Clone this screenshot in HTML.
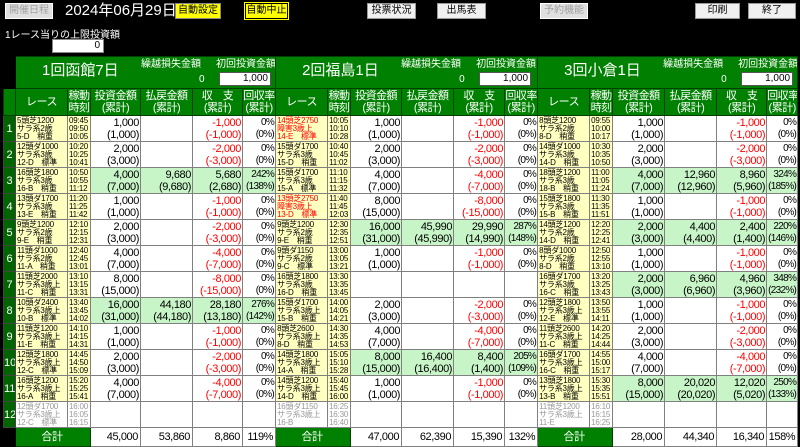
<!DOCTYPE html>
<html><head><meta charset="utf-8">
<style>
body{margin:0;background:#000;width:800px;height:446px;overflow:hidden;font-family:"Liberation Sans","Noto Sans CJK JP",sans-serif;position:relative}
.b{position:absolute;top:3px;height:16px;font-size:10px;line-height:14px;text-align:center;box-sizing:border-box;overflow:hidden;white-space:nowrap}
.gray{background:#e0e0e0;color:#a0a0a0;border:1px solid #fff}
.wb{background:#f0f0f0;color:#000;border:1px solid #999}
.yl{background:#ffff00;color:#000;border:1px solid #888}
table{position:absolute;left:3px;top:56px;border-collapse:collapse;table-layout:fixed;width:794px}
td{border:1px solid #808080;padding:0;font-size:11px;line-height:12px;overflow:hidden;white-space:nowrap;background:#fff;color:#000}
tr.d{height:26px}
td.i{background:#006400;color:#fff;text-align:center;font-size:11px;border-color:#444}
td.k{background:#000;border-color:#000}
td.r,td.t{background:#ffffc0;font-size:8px;line-height:8px;text-align:left;padding-left:1px;vertical-align:top;padding-top:1px;letter-spacing:-0.2px}
td.rd{color:#f00}
td.g{background:#fff;color:#999}
td.n{text-align:right;padding-right:1px;letter-spacing:-0.4px}
tr.d td:nth-child(7),tr.d td:nth-child(13),tr.d td:nth-child(19){font-size:10px;letter-spacing:-0.7px}
td.m{color:#f00}
td.w{background:#c8f5c8}
tr.h2 td{background:#008000;color:#fff;text-align:center;font-size:11px;line-height:12px;border-color:#004000;height:26px;letter-spacing:-0.5px}
tr.h1 td.v{background:#008000;color:#fff;border-color:#004000;height:31px;position:relative}
.vt{position:absolute;left:26px;top:8px;font-size:15px}
.l1{position:absolute;left:125px;top:2px;font-size:10px}
.l0{position:absolute;left:183px;top:17px;font-size:10px}
.l2{position:absolute;left:200px;top:2px;font-size:10px}
.in{position:absolute;left:203px;top:15px;width:52px;height:14px;background:#fff;color:#000;border:1px solid #555;font-size:10px;line-height:12px;text-align:right;box-sizing:border-box;padding-right:2px}
tr.tt td{height:18px;font-size:11px;text-align:right;padding-right:2px;letter-spacing:-0.4px}
tr.tt td.gl{background:#008000;color:#fff;text-align:center;border-color:#004000}
</style></head><body>
<div class="b gray" style="left:5px;width:48px">開催日程</div>
<div style="position:absolute;left:65px;top:2px;color:#fff;font-size:15px;line-height:18px">2024年06月29日</div>
<div class="b yl" style="left:175px;width:46px">自動設定</div>
<div class="b yl" style="left:245px;width:43px;border:1px solid #000;outline:1px solid #ff0">自動中止</div>
<div class="b wb" style="left:367px;width:49px">投票状況</div>
<div class="b wb" style="left:437px;width:49px">出馬表</div>
<div class="b gray" style="left:540px;width:48px">予約機能</div>
<div class="b wb" style="left:695px;width:45px">印刷</div>
<div class="b wb" style="left:748px;width:48px">終了</div>
<div style="position:absolute;left:5px;top:26px;color:#fff;font-size:10px">1レース当りの上限投資額</div>
<div style="position:absolute;left:52px;top:39px;width:52px;height:14px;background:#fff;border:1px solid #888;box-sizing:border-box;font-size:10px;line-height:12px;text-align:right;padding-right:3px">0</div>

<table>
<colgroup><col style="width:12px">
<col style="width:52px"><col style="width:23px"><col style="width:50px"><col style="width:52px"><col style="width:50px"><col style="width:33px">
<col style="width:52px"><col style="width:23px"><col style="width:51px"><col style="width:52px"><col style="width:51px"><col style="width:33px">
<col style="width:52px"><col style="width:23px"><col style="width:52px"><col style="width:52px"><col style="width:50px"><col style="width:31px">
</colgroup>
<tr class="h1"><td class="k"></td>
<td class="v" colspan="6"><span class="vt">1回函館7日</span><span class="l1">繰越損失金額</span><span class="l0">0</span><span class="l2">初回投資金額</span><span class="in">1,000</span></td>
<td class="v" colspan="6"><span class="vt">2回福島1日</span><span class="l1">繰越損失金額</span><span class="l0">0</span><span class="l2">初回投資金額</span><span class="in">1,000</span></td>
<td class="v" colspan="6"><span class="vt">3回小倉1日</span><span class="l1">繰越損失金額</span><span class="l0">0</span><span class="l2">初回投資金額</span><span class="in">1,000</span></td></tr>
<tr class="h2"><td class="k"></td>
<td>レース</td><td>稼動<br>時刻</td><td>投資金額<br>(累計)</td><td>払戻金額<br>(累計)</td><td>収　支<br>(累計)</td><td>回収率<br>(累計)</td>
<td>レース</td><td>稼動<br>時刻</td><td>投資金額<br>(累計)</td><td>払戻金額<br>(累計)</td><td>収　支<br>(累計)</td><td>回収率<br>(累計)</td>
<td>レース</td><td>稼動<br>時刻</td><td>投資金額<br>(累計)</td><td>払戻金額<br>(累計)</td><td>収　支<br>(累計)</td><td>回収率<br>(累計)</td></tr>

<tr class="d"><td class="i">1</td>
<td class="r">5頭芝1200<br>サラ系2歳<br>5-D　稍重</td><td class="t">09:45<br>09:50<br>10:05</td><td class="n">1,000<br>(1,000)</td><td class="n"></td><td class="n m">-1,000<br>(-1,000)</td><td class="n">0%<br>(0%)</td>
<td class="r rd">14頭芝2750<br>障害3歳上<br>14-E　標準</td><td class="t">10:05<br>10:10<br>10:28</td><td class="n">1,000<br>(1,000)</td><td class="n"></td><td class="n m">-1,000<br>(-1,000)</td><td class="n">0%<br>(0%)</td>
<td class="r">8頭芝1200<br>サラ系2歳<br>8-D　稍重</td><td class="t">09:55<br>10:00<br>10:17</td><td class="n">1,000<br>(1,000)</td><td class="n"></td><td class="n m">-1,000<br>(-1,000)</td><td class="n">0%<br>(0%)</td></tr>

<tr class="d"><td class="i">2</td>
<td class="r">12頭ダ1000<br>サラ系3歳<br>12-D　標準</td><td class="t">10:20<br>10:25<br>10:41</td><td class="n">2,000<br>(3,000)</td><td class="n"></td><td class="n m">-2,000<br>(-3,000)</td><td class="n">0%<br>(0%)</td>
<td class="r">15頭ダ1700<br>サラ系3歳<br>15-D　稍重</td><td class="t">10:40<br>10:45<br>11:02</td><td class="n">2,000<br>(3,000)</td><td class="n"></td><td class="n m">-2,000<br>(-3,000)</td><td class="n">0%<br>(0%)</td>
<td class="r">14頭ダ1000<br>サラ系3歳<br>14-D　稍重</td><td class="t">10:30<br>10:35<br>10:50</td><td class="n">2,000<br>(3,000)</td><td class="n"></td><td class="n m">-2,000<br>(-3,000)</td><td class="n">0%<br>(0%)</td></tr>

<tr class="d"><td class="i">3</td>
<td class="r">16頭芝1800<br>サラ系3歳<br>16-B　稍重</td><td class="t">10:50<br>10:55<br>11:12</td><td class="n w">4,000<br>(7,000)</td><td class="n w">9,680<br>(9,680)</td><td class="n w">5,680<br>(2,680)</td><td class="n w">242%<br>(138%)</td>
<td class="r">15頭ダ1700<br>サラ系3歳<br>15-A　標準</td><td class="t">11:10<br>11:15<br>11:32</td><td class="n">4,000<br>(7,000)</td><td class="n"></td><td class="n m">-4,000<br>(-7,000)</td><td class="n">0%<br>(0%)</td>
<td class="r">18頭芝1200<br>サラ系3歳<br>18-B　稍重</td><td class="t">11:00<br>11:05<br>11:24</td><td class="n w">4,000<br>(7,000)</td><td class="n w">12,960<br>(12,960)</td><td class="n w">8,960<br>(5,960)</td><td class="n w">324%<br>(185%)</td></tr>

<tr class="d"><td class="i">4</td>
<td class="r">13頭ダ1700<br>サラ系3歳<br>13-E　稍重</td><td class="t">11:20<br>11:25<br>11:42</td><td class="n">1,000<br>(1,000)</td><td class="n"></td><td class="n m">-1,000<br>(-1,000)</td><td class="n">0%<br>(0%)</td>
<td class="r rd">13頭芝2750<br>障害3歳上<br>13-D　標準</td><td class="t">11:40<br>11:45<br>12:03</td><td class="n">8,000<br>(15,000)</td><td class="n"></td><td class="n m">-8,000<br>(-15,000)</td><td class="n">0%<br>(0%)</td>
<td class="r">15頭芝1800<br>サラ系3歳<br>15-B　稍重</td><td class="t">11:30<br>11:35<br>11:51</td><td class="n">1,000<br>(1,000)</td><td class="n"></td><td class="n m">-1,000<br>(-1,000)</td><td class="n">0%<br>(0%)</td></tr>

<tr class="d"><td class="i">5</td>
<td class="r">9頭芝1200<br>サラ系2歳<br>9-E　稍重</td><td class="t">12:10<br>12:15<br>12:31</td><td class="n">2,000<br>(3,000)</td><td class="n"></td><td class="n m">-2,000<br>(-3,000)</td><td class="n">0%<br>(0%)</td>
<td class="r">9頭芝1200<br>サラ系2歳<br>9-E　稍重</td><td class="t">12:30<br>12:35<br>12:51</td><td class="n w">16,000<br>(31,000)</td><td class="n w">45,990<br>(45,990)</td><td class="n w">29,990<br>(14,990)</td><td class="n w">287%<br>(148%)</td>
<td class="r">14頭芝1200<br>サラ系2歳<br>14-D　稍重</td><td class="t">12:20<br>12:25<br>12:41</td><td class="n w">2,000<br>(3,000)</td><td class="n w">4,400<br>(4,400)</td><td class="n w">2,400<br>(1,400)</td><td class="n w">220%<br>(146%)</td></tr>

<tr class="d"><td class="i">6</td>
<td class="r">11頭ダ1000<br>サラ系2歳<br>11-A　稍重</td><td class="t">12:40<br>12:45<br>13:01</td><td class="n">4,000<br>(7,000)</td><td class="n"></td><td class="n m">-4,000<br>(-7,000)</td><td class="n">0%<br>(0%)</td>
<td class="r">9頭ダ1150<br>サラ系2歳<br>9-C　標準</td><td class="t">13:00<br>13:05<br>13:21</td><td class="n">1,000<br>(1,000)</td><td class="n"></td><td class="n m">-1,000<br>(-1,000)</td><td class="n">0%<br>(0%)</td>
<td class="r">8頭ダ1000<br>サラ系2歳<br>8-D　稍重</td><td class="t">12:50<br>12:55<br>13:10</td><td class="n">1,000<br>(1,000)</td><td class="n"></td><td class="n m">-1,000<br>(-1,000)</td><td class="n">0%<br>(0%)</td></tr>

<tr class="d"><td class="i">7</td>
<td class="r">11頭芝2000<br>サラ系3歳上<br>11-C　稍重</td><td class="t">13:10<br>13:15<br>13:31</td><td class="n">8,000<br>(15,000)</td><td class="n"></td><td class="n m">-8,000<br>(-15,000)</td><td class="n">0%<br>(0%)</td>
<td class="r">16頭芝1800<br>サラ系3歳<br>16-D　稍重</td><td class="t">13:30<br>13:35<br>13:45</td><td class="n"></td><td class="n"></td><td class="n"></td><td class="n"></td>
<td class="r">16頭ダ1700<br>サラ系3歳<br>16-C　稍重</td><td class="t">13:20<br>13:25<br>13:43</td><td class="n w">2,000<br>(3,000)</td><td class="n w">6,960<br>(6,960)</td><td class="n w">4,960<br>(3,960)</td><td class="n w">348%<br>(232%)</td></tr>

<tr class="d"><td class="i">8</td>
<td class="r">10頭ダ2400<br>サラ系3歳上<br>10-B　標準</td><td class="t">13:40<br>13:45<br>14:02</td><td class="n w">16,000<br>(31,000)</td><td class="n w">44,180<br>(44,180)</td><td class="n w">28,180<br>(13,180)</td><td class="n w">276%<br>(142%)</td>
<td class="r">15頭ダ1700<br>サラ系3歳上<br>15-B　稍重</td><td class="t">14:00<br>14:05<br>14:21</td><td class="n">2,000<br>(3,000)</td><td class="n"></td><td class="n m">-2,000<br>(-3,000)</td><td class="n">0%<br>(0%)</td>
<td class="r">12頭芝1800<br>サラ系3歳上<br>12-E　標準</td><td class="t">13:50<br>13:55<br>14:11</td><td class="n">1,000<br>(1,000)</td><td class="n"></td><td class="n m">-1,000<br>(-1,000)</td><td class="n">0%<br>(0%)</td></tr>

<tr class="d"><td class="i">9</td>
<td class="r">11頭芝1200<br>サラ系3歳上<br>11-E　稍重</td><td class="t">14:10<br>14:15<br>14:31</td><td class="n">1,000<br>(1,000)</td><td class="n"></td><td class="n m">-1,000<br>(-1,000)</td><td class="n">0%<br>(0%)</td>
<td class="r">8頭芝2600<br>サラ系3歳上<br>8-D　稍重</td><td class="t">14:30<br>14:35<br>14:53</td><td class="n">4,000<br>(7,000)</td><td class="n"></td><td class="n m">-4,000<br>(-7,000)</td><td class="n">0%<br>(0%)</td>
<td class="r">11頭芝2600<br>サラ系3歳上<br>11-C　稍重</td><td class="t">14:20<br>14:25<br>14:44</td><td class="n">2,000<br>(3,000)</td><td class="n"></td><td class="n m">-2,000<br>(-3,000)</td><td class="n">0%<br>(0%)</td></tr>

<tr class="d"><td class="i">10</td>
<td class="r">12頭芝1800<br>サラ系3歳上<br>12-C　標準</td><td class="t">14:45<br>14:50<br>15:09</td><td class="n">2,000<br>(3,000)</td><td class="n"></td><td class="n m">-2,000<br>(-3,000)</td><td class="n">0%<br>(0%)</td>
<td class="r">14頭芝1800<br>サラ系3歳上<br>14-A　稍重</td><td class="t">15:05<br>15:10<br>15:28</td><td class="n w">8,000<br>(15,000)</td><td class="n w">16,400<br>(16,400)</td><td class="n w">8,400<br>(1,400)</td><td class="n w">205%<br>(109%)</td>
<td class="r">16頭ダ1700<br>サラ系3歳上<br>16-C　稍重</td><td class="t">14:55<br>15:00<br>15:17</td><td class="n">4,000<br>(7,000)</td><td class="n"></td><td class="n m">-4,000<br>(-7,000)</td><td class="n">0%<br>(0%)</td></tr>

<tr class="d"><td class="i">11</td>
<td class="r">16頭芝1200<br>サラ系3歳上<br>16-A　稍重</td><td class="t">15:20<br>15:25<br>15:41</td><td class="n">4,000<br>(7,000)</td><td class="n"></td><td class="n m">-4,000<br>(-7,000)</td><td class="n">0%<br>(0%)</td>
<td class="r">14頭芝1200<br>サラ系3歳上<br>14-D　稍重</td><td class="t">15:40<br>15:45<br>16:00</td><td class="n">1,000<br>(1,000)</td><td class="n"></td><td class="n m">-1,000<br>(-1,000)</td><td class="n">0%<br>(0%)</td>
<td class="r">13頭芝1800<br>サラ系3歳上<br>13-B　稍重</td><td class="t">15:30<br>15:35<br>15:51</td><td class="n w">8,000<br>(15,000)</td><td class="n w">20,020<br>(20,020)</td><td class="n w">12,020<br>(5,020)</td><td class="n w">250%<br>(133%)</td></tr>

<tr class="d"><td class="i">12</td>
<td class="r g">12頭ダ1700<br>サラ系3歳上<br>12-C　標準</td><td class="t g">16:00<br>16:05<br>16:15</td><td class="n"></td><td class="n"></td><td class="n"></td><td class="n"></td>
<td class="r g">16頭ダ1150<br>サラ系3歳上<br>16-B</td><td class="t g">16:25<br>16:30<br>16:40</td><td class="n"></td><td class="n"></td><td class="n"></td><td class="n"></td>
<td class="r g">11頭芝1200<br>サラ系3歳上<br>11-E</td><td class="t g">16:10<br>16:15<br>16:25</td><td class="n"></td><td class="n"></td><td class="n"></td><td class="n"></td></tr>

<tr class="tt"><td class="k"></td>
<td class="gl" colspan="2">合計</td><td>45,000</td><td>53,860</td><td>8,860</td><td>119%</td>
<td class="gl" colspan="2">合計</td><td>47,000</td><td>62,390</td><td>15,390</td><td>132%</td>
<td class="gl" colspan="2">合計</td><td>28,000</td><td>44,340</td><td>16,340</td><td>158%</td></tr>
</table>
</body></html>
